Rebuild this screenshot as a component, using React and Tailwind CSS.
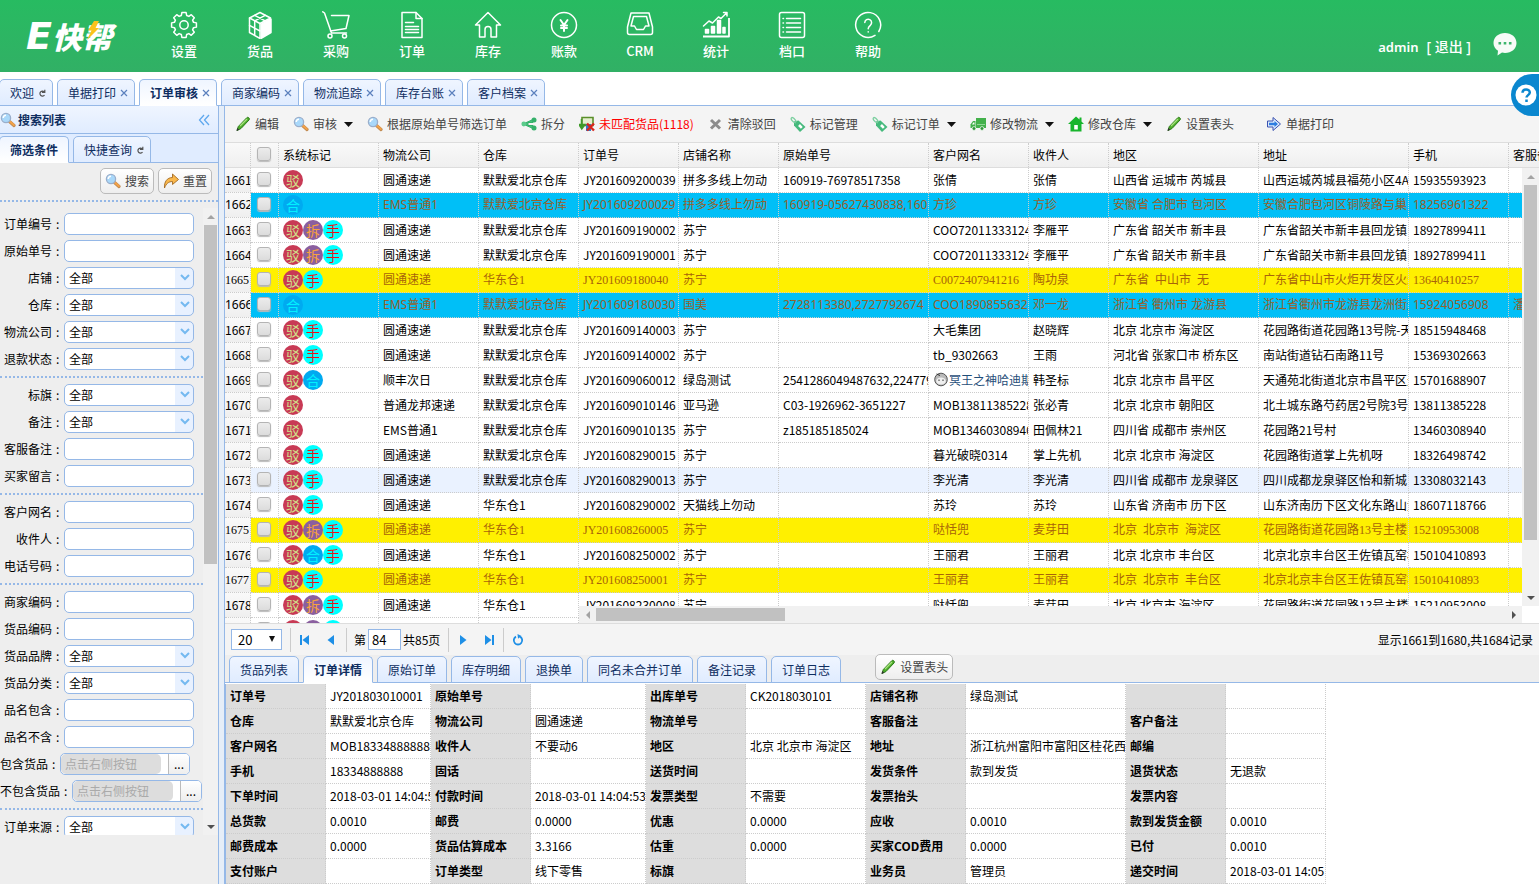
import React from "react";

const NAV = [
  ["设置", GearIcon],
  ["货品", BoxIcon],
  ["采购", CartIcon],
  ["订单", DocIcon],
  ["库存", HomeIcon],
  ["账款", YenIcon],
  ["CRM", InboxIcon],
  ["统计", ChartIcon],
  ["档口", ListIcon],
  ["帮助", HelpIcon],
];

function gearPath() {
  const pts = [];
  for (let i = 0; i < 8; i++) {
    const a = (i * Math.PI) / 4;
    [
      [-0.27, 9.9],
      [-0.17, 12.6],
      [0.17, 12.6],
      [0.27, 9.9],
    ].forEach(([d, r]) => {
      pts.push(`${(14 + r * Math.sin(a + d)).toFixed(2)} ${(14 - r * Math.cos(a + d)).toFixed(2)}`);
    });
  }
  return `M${pts.join("L")}Z`;
}

function NavSvg({ children }) {
  return (
    <svg className="size-7" viewBox="0 0 28 28" fill="none" stroke="white" strokeWidth="1.5" strokeLinejoin="round" strokeLinecap="round" aria-hidden="true">
      {children}
    </svg>
  );
}
function GearIcon() {
  return (
    <NavSvg>
      <path d={gearPath()} />
      <circle cx="14" cy="14" r="4.2" />
    </NavSvg>
  );
}
function BoxIcon() {
  return (
    <NavSvg>
      <path d="M14 1.5 24.5 7 14 12.5 3.5 7Z" />
      <path d="M8.7 4.3 19.2 9.8M19.2 4.3 8.7 9.8" />
      <path d="M3.5 7v14.5L14 27.5V12.5" />
      <path d="M3.5 14.3 14 20M8.7 9.8V24.5" />
      <path d="M15.2 13.2 25 8v13.5l-9.8 5.8Z" fill="white" />
    </NavSvg>
  );
}
function CartIcon() {
  return (
    <NavSvg>
      <path d="M.8.8 2.5 2 9.500 22h15" />
      <path d="M9.500 4.500 27 4.500l-3 13L8.500 20" />
      <circle cx="8" cy="25" r="2" />
      <circle cx="22.5" cy="25" r="2" />
    </NavSvg>
  );
}
function DocIcon() {
  return (
    <NavSvg>
      <path d="M4 1.5h14l6 6V26.500H4Z" />
      <path d="M18 1.500v6h6M7.500 11.500h8M7.500 15.500h13M7.500 18.500h13M7.500 21.500h13" />
    </NavSvg>
  );
}
function HomeIcon() {
  return (
    <NavSvg>
      <path d="M5.500 14H1.500L14 1.500 26.500 14h-4v12h-5.500v-7.500a3 3 0 0 0-6 0V26H5.500Z" />
    </NavSvg>
  );
}
function YenIcon() {
  return (
    <NavSvg>
      <circle cx="14" cy="14" r="12.500" />
      <path d="M10.500 9 14 14l3.500-5M14 14v6M11 14.500h6M11 17h6" strokeWidth="2" />
    </NavSvg>
  );
}
function InboxIcon() {
  return (
    <NavSvg>
      <path d="M5 2h18L26.500 16v5.500a2 2 0 0 1-2 2h-21a2 2 0 0 1-2-2V16Z" />
      <path d="M7.500 5.500h13L23 15h-3.500l-2 3.500h-7L8.500 15H5Z" />
    </NavSvg>
  );
}
function ChartIcon() {
  return (
    <NavSvg>
      <path d="M1.500 15 7 10l3.500 2 6-6 2.500 1.500 6-6M21.500 1.500H25V5" />
      <path d="M1 25.500h26V7" strokeWidth="1.800" strokeLinecap="butt" />
      <path d="M3.500 18.500h3V22h-3ZM9.500 15.500h3V22h-3ZM15.500 9.500h3V22h-3ZM21 16.500h2V22h-2Z" fill="white" />
    </NavSvg>
  );
}
function ListIcon() {
  return (
    <NavSvg>
      <rect x="1.500" y="1.500" width="25" height="25" rx="2" />
      <path d="M8.500 7.500h14M8.500 12h14M8.500 16.500h14M8.500 21h14M5 7.500h.500M5 12h.500M5 16.500h.500M5 21h.500" />
    </NavSvg>
  );
}
function HelpIcon() {
  return (
    <NavSvg>
      <path d="M24.800 20.500A12.500 12.500 0 1 0 21 24.400" />
      <path d="M10.800 11.500a3.400 3.400 0 1 1 5.500 2.800C14.800 15.500 14.200 16 14.200 17.800M14.200 20.800v.300" />
    </NavSvg>
  );
}

function Magnifier() {
  return (
    <svg className="size-4 shrink-0" viewBox="0 0 16 16" aria-hidden="true">
      <path d="m9.500 9.500 4.500 4" stroke="#c08a50" strokeWidth="3.200" strokeLinecap="round" />
      <path d="m9.800 9.500 4 3.600" stroke="#f2a24a" strokeWidth="2" strokeLinecap="round" />
      <circle cx="6" cy="6" r="4.600" fill="#a9d8fa" stroke="#9aaecb" strokeWidth="1.300" />
      <path d="M3.200 6A3 3 0 0 1 6 3.200" stroke="white" strokeWidth="1.500" fill="none" />
    </svg>
  );
}
function Pencil() {
  return (
    <svg className="size-4 shrink-0" viewBox="0 0 16 16" aria-hidden="true">
      <path d="M2 14.500 3.300 10.500 11.500 2a1.500 1.500 0 0 1 2.500 2L6 12.500Z" fill="#4fae2c" stroke="#2b7a18" />
      <path d="m5 10 7-7" stroke="#a9e27e" strokeWidth="1.300" />
      <path d="m1.500 15 .800-3 2 1.800Z" fill="#333" />
    </svg>
  );
}
function Redo() {
  return (
    <svg className="size-4 shrink-0" viewBox="0 0 16 16" aria-hidden="true">
      <path d="M1.500 15C1 9 4 4.500 9.500 4.500V1L15.500 6.500 9.500 11.500V8.500C5.500 8.500 3 11 1.500 15Z" fill="#f9b84c" stroke="#a36a22" strokeWidth=".900" />
    </svg>
  );
}
function Share() {
  return (
    <svg className="size-4 shrink-0" viewBox="0 0 16 16" aria-hidden="true">
      <path d="M12 3.500 2 8l10 4.500V9.500H7v-3h5Z" fill="#47c27c" stroke="#35b06a" />
      <circle cx="2.800" cy="8" r="2.400" fill="#5bcb8b" />
      <circle cx="13" cy="4" r="2.500" fill="#35b06a" />
      <circle cx="13" cy="12" r="2.500" fill="#35b06a" />
    </svg>
  );
}
function Mismatch() {
  return (
    <svg className="size-4 shrink-0" viewBox="0 0 16 16" aria-hidden="true">
      <path d="M3 1.500h11v8H3Z" fill="#e4efcf" stroke="#5a8f2a" strokeWidth="1.600" />
      <path d="M2.500 3v8M0 8.500 2.800 13 6 8.500Z" fill="#3f9a2a" stroke="#3f9a2a" strokeWidth="1.500" />
      <path d="M7 8h5v7H7Z" fill="#3b78c4" />
      <path d="m8 7.500 7 7M15 7.500l-7 7" stroke="#d8261c" strokeWidth="2.400" />
    </svg>
  );
}
function GrayCross() {
  return (
    <svg className="size-4 shrink-0" viewBox="0 0 16 16" aria-hidden="true">
      <path d="m3 4 9 8.500M12 4 3 12.500" stroke="#8d8d8d" strokeWidth="3" />
    </svg>
  );
}
function Tag() {
  return (
    <svg className="size-4 shrink-0" viewBox="0 0 16 16" aria-hidden="true">
      <path d="M4 5.500 8.500 4.500l7 6.500-5.500 5-6-6.500Z" fill="#45b97c" />
      <path d="m9 9 2.800 2.800" stroke="white" strokeWidth="2.600" />
      <path d="M6 7C2 5.500.500 3 1.500 1.800S5 3 6.500 6" stroke="#7bcf9f" strokeWidth="1.300" fill="none" />
    </svg>
  );
}
function Truck() {
  return (
    <svg className="size-4 shrink-0" viewBox="0 0 16 16" aria-hidden="true">
      <path d="M6 2h10v10H6Z" fill="#43b14b" />
      <path d="M5.500 5H3L.500 8.500V12h5Z" fill="#43b14b" />
      <path d="M2 8.500 3.300 6.500H4.500v2Z" fill="white" />
      <path d="M7 8.500h8" stroke="#8fd695" />
      <circle cx="4" cy="12.500" r="1.900" fill="#2e9437" stroke="white" strokeWidth=".700" />
      <circle cx="12" cy="12.500" r="1.900" fill="#2e9437" stroke="white" strokeWidth=".700" />
    </svg>
  );
}
function House() {
  return (
    <svg className="size-4 shrink-0" viewBox="0 0 16 16" aria-hidden="true">
      <path d="M8 .500 0 8h2.500v7.500h11V8H16l-2.500-2.500V1.500h-2v2Z" fill="#18b52d" />
      <path d="M6.200 9h3.600v4.500H6.200Z" fill="white" />
    </svg>
  );
}
function ArrowRightBlue() {
  return (
    <svg className="size-4 shrink-0" viewBox="0 0 16 16" aria-hidden="true">
      <path d="M1.500 5H7V1.500L14.500 8 7 14.500V11H1.500Z" fill="#dceafd" stroke="#3a52b0" />
      <path d="M3 6.800h5.500V5L12 8l-3.500 3V9.200H3Z" fill="#2e7de0" />
    </svg>
  );
}
function Caret() {
  return (
    <svg className="ml-[3px] h-[5px] w-[9px]" viewBox="0 0 9 5" aria-hidden="true">
      <path d="M0 0h9L4.500 5Z" fill="#111" />
    </svg>
  );
}
function Reload() {
  return (
    <svg className="size-2" viewBox="0 0 8 8" aria-hidden="true">
      <path d="M6.500 3.200A2.500 2.500 0 1 0 6.500 6M6.800.800v2.500H4" fill="none" stroke="#555" strokeWidth="1.200" />
    </svg>
  );
}
function CloseX() {
  return (
    <svg className="size-2" viewBox="0 0 8 8" aria-hidden="true">
      <path d="m1 1 6 6M7 1 1 7" stroke="#5b80bd" strokeWidth="1.200" />
    </svg>
  );
}

function Tab({ label, active, mark, first }) {
  return (
    <div
      className={
        "-mb-px flex h-[27px] shrink-0 items-center gap-1 rounded-t-[5px] border border-[#95b8e7] text-[#0e2d5f] " +
        (first ? "-ml-px " : "") +
        (mark ? "pr-[6px] pl-[10px] " : "px-[10px] ") +
        (active ? "border-b-white bg-linear-to-b from-[#eff5ff] to-white font-bold" : "bg-linear-to-b from-[#eff5ff] to-[#e0ecff]")
      }
    >
      <button type="button">{label}</button>
      {mark && (
        <button type="button" aria-label={(mark === "close" ? "关闭 " : "刷新 ") + label}>
          {mark === "close" ? <CloseX /> : <Reload />}
        </button>
      )}
    </div>
  );
}

function PushButton({ icon, children }) {
  return (
    <button type="button" className="flex h-[26px] items-center gap-1 rounded-[5px] border border-[#bbb] bg-linear-to-b from-white to-[#eee] px-1 text-[#444]">
      {icon}
      {children}
    </button>
  );
}

function ToolItem({ icon, label, menu, red }) {
  return (
    <button type="button" className={"flex shrink-0 items-center gap-1 whitespace-nowrap " + (red ? "text-[#f00]" : "text-[#444]")}>
      {icon}
      <span>{label}</span>
      {menu && <Caret />}
    </button>
  );
}

const FIELD_GROUPS = [
  [["订单编号"], ["原始单号"], ["店铺", "select"], ["仓库", "select"], ["物流公司", "select"], ["退款状态", "select"]],
  [["标旗", "select"], ["备注", "select"], ["客服备注"], ["买家留言"]],
  [["客户网名"], ["收件人"], ["电话号码"]],
  [["商家编码"], ["货品编码"], ["货品品牌", "select"], ["货品分类", "select"], ["品名包含"], ["品名不含"], ["包含货品", "pick"], ["不包含货品", "pick"]],
  [["订单来源", "select"]],
];

function Field({ label, kind }) {
  const id = "f-" + label;
  return (
    <div className="flex items-center gap-1">
      <label htmlFor={id} className={"flex shrink-0 justify-end gap-1 whitespace-nowrap " + (kind === "pick" ? "" : "w-[60px]")}>
        <span>{label}</span>
        <span className="w-1">:</span>
      </label>
      {!kind && <input id={id} className="h-[22px] w-[130px] rounded-[5px] border border-[#95b8e7] bg-white px-1 outline-none" />}
      {kind === "select" && (
        <div className="relative flex">
          <select id={id} className="h-[22px] w-[130px] appearance-none rounded-[5px] border border-[#95b8e7] bg-linear-to-r from-white from-[110px] to-[#e8f1ff] to-[110px] px-1 outline-none">
            <option>全部</option>
          </select>
          <svg className="pointer-events-none absolute top-[7px] right-1 h-[7px] w-[10px]" viewBox="0 0 10 7" fill="none" aria-hidden="true">
            <path d="m1 1 4 4 4-4" stroke="#74b9f0" strokeWidth="2" />
          </svg>
        </div>
      )}
      {kind === "pick" && (
        <div className="flex h-[22px] w-[130px] shrink-0 overflow-hidden rounded-[5px] border border-[#95b8e7] bg-white">
          <input id={id} disabled placeholder="点击右侧按钮" className="w-[100px] rounded-[5px] bg-[#ddd] px-1 placeholder:text-[#aaa]" />
          <button type="button" aria-label={"选择" + label} className="ml-auto w-[21px] border-l border-[#bbb] bg-linear-to-b from-white to-[#eee]">
            ...
          </button>
        </div>
      )}
    </div>
  );
}

function Arrow({ dir, dark }) {
  const d = { up: "M0 6h8L4 2Z", down: "M0 2h8L4 6Z", left: "M6 0v8L2 4Z", right: "M2 0v8L6 4Z" }[dir];
  return (
    <svg className="size-2" viewBox="0 0 8 8" aria-hidden="true">
      <path d={d} fill={dark ? "#505050" : "#a3a3a3"} />
    </svg>
  );
}

const BADGES = {
  驳: "bg-[#c83a55] text-[#cfe08a]",
  拆: "bg-[#8a5f9f] text-[#f8a23c]",
  手: "bg-[#00ffff] text-[#e81414]",
  合: "bg-[#00aaf0] text-[#00f0ff]",
};

// number, tone, badges, carrier, warehouse, order, shop, source no, customer, receiver, region, address, phone, service note
const ROWS = [
  ["1661", "", "驳", "圆通速递", "默默爱北京仓库", "JY201609200039", "拼多多线上勿动", "160919-76978517358", "张倩", "张倩", "山西省 运城市 芮城县", "山西运城芮城县福苑小区4A", "15935593923", ""],
  ["1662", "blue", "合", "EMS普通1", "默默爱北京仓库", "JY201609200029", "拼多多线上勿动", "160919-05627430838,160", "方珍", "方珍", "安徽省 合肥市 包河区", "安徽合肥包河区铜陵路与巢", "18256961322", ""],
  ["1663", "", "驳拆手", "圆通速递", "默默爱北京仓库", "JY201609190002", "苏宁", "", "COO72011333124", "李雁平", "广东省 韶关市 新丰县", "广东省韶关市新丰县回龙镇", "18927899411", ""],
  ["1664", "", "驳拆手", "圆通速递", "默默爱北京仓库", "JY201609190001", "苏宁", "", "COO72011333124", "李雁平", "广东省 韶关市 新丰县", "广东省韶关市新丰县回龙镇", "18927899411", ""],
  ["1665", "yellow", "驳手", "圆通速递", "华东仓1", "JY201609180040", "苏宁", "", "C0072407941216", "陶功泉", "广东省  中山市  无", "广东省中山市火炬开发区火炬", "13640410257", ""],
  ["1666", "blue", "合", "EMS普通1", "默默爱北京仓库", "JY201609180030", "国美", "2728113380,2727792674", "COO1890855632", "邓一龙", "浙江省 衢州市 龙游县", "浙江省衢州市龙游县龙洲街道", "15924056908", "潘"],
  ["1667", "", "驳手", "圆通速递", "默默爱北京仓库", "JY201609140003", "苏宁", "", "大毛集团", "赵晓辉", "北京 北京市 海淀区", "花园路街道花园路13号院-天", "18515948468", ""],
  ["1668", "", "驳手", "圆通速递", "默默爱北京仓库", "JY201609140002", "苏宁", "", "tb_9302663", "王雨", "河北省 张家口市 桥东区", "南站街道钻石南路11号", "15369302663", ""],
  ["1669", "", "驳合", "顺丰次日", "默默爱北京仓库", "JY201609060012", "绿岛测试", "2541286049487632,224779", "@冥王之神哈迪斯", "韩圣标", "北京 北京市 昌平区", "天通苑北街道北京市昌平区天", "15701688907", ""],
  ["1670", "", "驳", "普通龙邦速递", "默默爱北京仓库", "JY201609010146", "亚马逊", "C03-1926962-3651227", "MOB13811385228", "张必青", "北京 北京市 朝阳区", "北土城东路芍药居2号院3号", "13811385228", ""],
  ["1671", "", "驳", "EMS普通1", "默默爱北京仓库", "JY201609010135", "苏宁", "z185185185024", "MOB13460308940", "田佩林21", "四川省 成都市 崇州区", "花园路21号村", "13460308940", ""],
  ["1672", "", "驳手", "圆通速递", "默默爱北京仓库", "JY201608290015", "苏宁", "", "暮光破晓0314", "掌上先机", "北京 北京市 海淀区", "花园路街道掌上先机呀", "18326498742", ""],
  ["1673", "hover", "驳手", "圆通速递", "默默爱北京仓库", "JY201608290013", "苏宁", "", "李光清", "李光清", "四川省 成都市 龙泉驿区", "四川成都龙泉驿区怡和新城", "13308032143", ""],
  ["1674", "", "驳手", "圆通速递", "华东仓1", "JY201608290002", "天猫线上勿动", "", "苏玲", "苏玲", "山东省 济南市 历下区", "山东济南历下区文化东路山大", "18607118766", ""],
  ["1675", "yellow", "驳拆手", "圆通速递", "华东仓1", "JY201608260005", "苏宁", "", "哒恬兜", "麦芽田", "北京  北京市  海淀区", "花园路街道花园路13号主楼", "15210953008", ""],
  ["1676", "", "驳合手", "圆通速递", "华东仓1", "JY201608250002", "苏宁", "", "王丽君", "王丽君", "北京 北京市 丰台区", "北京北京丰台区王佐镇瓦窑村", "15010410893", ""],
  ["1677", "yellow", "驳手", "圆通速递", "华东仓1", "JY201608250001", "苏宁", "", "王丽君", "王丽君", "北京  北京市  丰台区", "北京北京丰台区王佐镇瓦窑村", "15010410893", ""],
  ["1678", "", "驳拆手", "圆通速递", "华东仓1", "JY201608230008", "苏宁", "", "哒恬兜", "麦芽田", "北京 北京市 海淀区", "花园路街道花园路13号主楼", "15210953008", ""],
  ["", "", "驳拆手", "", "", "", "", "", "", "", "", "", "", ""],
];

const TONES = {
  "": "",
  hover: "bg-[#eaf2ff]",
  blue: "bg-[#00bff7] text-[#96602a] font-['Noto_Sans','Noto_Sans_CJK_SC',sans-serif]",
  yellow: "bg-[#fff000] text-[#a8640a] font-['Liberation_Serif','Noto_Sans_CJK_SC',serif]",
};

const CELL = "h-[25px] overflow-hidden border-r border-b border-dotted border-[#ccc] px-1 py-0 text-left leading-6 font-normal whitespace-pre";
const HEAD = "h-[25px] overflow-hidden border-r border-b border-dotted border-r-[#ccc] border-b-[#ddd] [border-bottom-style:solid] px-1 py-0 text-left leading-6 font-normal whitespace-nowrap";
const TABLE = "table-fixed border-separate border-spacing-0";
const CHECK = "mx-[2px] mb-[2px] block size-[14px] appearance-none rounded-[3px] border border-[#b4b4b4] bg-linear-to-b from-[#ececec] to-[#dcdcdc] shadow-[0_1px_1px_#bbb]";

function Cols({ widths }) {
  return (
    <colgroup>
      {widths.map((w, i) => (
        <col key={i} style={{ width: w }} />
      ))}
    </colgroup>
  );
}

const LEFT_W = [26, 28, 100, 100, 100];
const RIGHT_W = [100, 100, 150, 100, 80, 150, 150, 100, 100];
const RIGHT_HEAD = ["订单号", "店铺名称", "原始单号", "客户网名", "收件人", "地区", "地址", "手机", "客服备注"];

function Customer({ value }) {
  if (!value.startsWith("@")) return value;
  return (
    <a href="#customer" className="flex items-center text-[#1f4e79]">
      <svg className="size-4 shrink-0" viewBox="0 0 16 16" aria-hidden="true">
        <circle cx="8" cy="7.500" r="6.300" fill="#b9b9b9" stroke="#555" />
        <ellipse cx="8" cy="9" rx="4.800" ry="3.600" fill="#efefef" />
        <path d="M3.500 2 7 3.500M6 7.500v1.500M10 7.500v1.500" stroke="#333" />
      </svg>
      {value.slice(1)}
    </a>
  );
}

function OrderGrid() {
  return (
    <div className="flex min-h-0 flex-1 overflow-hidden bg-white">
      <div className="w-[354px] shrink-0 overflow-hidden">
        <table className={TABLE + " w-[354px]"}>
          <Cols widths={LEFT_W} />
          <thead>
            <tr className="bg-linear-to-b from-[#f9f9f9] to-[#efefef]">
              <th className={HEAD} aria-label="序号"></th>
              <th className={HEAD}>
                <input type="checkbox" aria-label="全选" className={CHECK} />
              </th>
              <th className={HEAD}>系统标记</th>
              <th className={HEAD}>物流公司</th>
              <th className={HEAD}>仓库</th>
            </tr>
          </thead>
          <tbody>
            {ROWS.map((r, i) => (
              <tr key={i} className={TONES[r[1]]}>
                <td className="h-[25px] overflow-hidden border-r border-b border-dotted border-[#ccc] bg-linear-to-b from-[#f9f9f9] to-[#efefef] p-0 leading-6 whitespace-nowrap text-black">{r[0]}</td>
                <td className={CELL}>
                  <input type="checkbox" aria-label={"选择第" + (i + 1) + "行"} className={CHECK} />
                </td>
                <td className={CELL}>
                  <div className="flex h-6 items-center">
                    {[...r[2]].map((b) => (
                      <span key={b} className={"flex size-5 items-center justify-center rounded-full font-['Noto_Sans_CJK_SC',sans-serif] text-[14px] leading-5 " + BADGES[b]}>
                        {b}
                      </span>
                    ))}
                  </div>
                </td>
                <td className={CELL}>{r[3]}</td>
                <td className={CELL}>{r[4]}</td>
              </tr>
            ))}
          </tbody>
        </table>
      </div>
      <div className="flex min-w-0 flex-1 flex-col">
        <div className="shrink-0 overflow-hidden border-b border-[#ddd] bg-linear-to-b from-[#f9f9f9] to-[#efefef]">
          <table className={TABLE + " w-[1030px]"}>
            <Cols widths={RIGHT_W} />
            <thead>
              <tr>
                {RIGHT_HEAD.map((h) => (
                  <th key={h} className="h-6 overflow-hidden border-r border-dotted border-[#ccc] px-1 py-0 text-left leading-6 font-normal whitespace-nowrap">
                    {h}
                  </th>
                ))}
              </tr>
            </thead>
          </table>
        </div>
        <div className="flex min-h-0 flex-1">
          <div className="min-w-0 flex-1 overflow-hidden">
            <table className={TABLE + " w-[1030px]"}>
              <Cols widths={RIGHT_W} />
              <tbody>
                {ROWS.map((r, n) => (
                  <tr key={n} className={TONES[r[1]]}>
                    {r.slice(5).map((c, i) => (
                      <td key={i} className={CELL}>
                        <Customer value={c} />
                      </td>
                    ))}
                  </tr>
                ))}
              </tbody>
            </table>
          </div>
          <div className="flex w-[17px] shrink-0 flex-col items-center bg-[#f1f1f1]">
            <div className="flex h-[17px] items-center"><Arrow dir="up" /></div>
            <div className="h-[81%] w-[13px] bg-[#c1c1c1]"></div>
            <div className="mt-auto flex h-[17px] items-center"><Arrow dir="down" dark /></div>
          </div>
        </div>
        <div className="mr-[17px] flex h-[17px] shrink-0 items-center bg-[#f1f1f1]">
          <div className="flex w-[17px] justify-center"><Arrow dir="left" /></div>
          <div className="h-[13px] w-1/5 bg-[#c1c1c1]"></div>
          <div className="ml-auto flex w-[17px] justify-center"><Arrow dir="right" dark /></div>
        </div>
      </div>
    </div>
  );
}

function PageBtn({ label, children }) {
  return (
    <button type="button" aria-label={label} className="flex size-[26px] items-center justify-center">
      <svg className="size-3" viewBox="0 0 12 12" fill="#1e8fe6" stroke="#1e8fe6" strokeWidth="0" aria-hidden="true">
        {children}
      </svg>
    </button>
  );
}

function Pager() {
  const sep = <span className="h-6 w-px bg-[#ccc]"></span>;
  return (
    <div className="flex h-8 shrink-0 items-center border-t border-[#ddd] bg-[#f4f4f4] pr-[6px] pl-[6px]">
      <div className="relative flex">
        <select aria-label="每页条数" className="h-[21px] w-[51px] appearance-none border border-[#95b8e7] bg-white px-[6px] text-[13px] leading-4">
          <option>20</option>
        </select>
        <svg className="pointer-events-none absolute top-[6px] right-[6px] size-2" viewBox="0 0 8 8" aria-hidden="true">
          <path d="M1 1h6L4 7Z" fill="#111" />
        </svg>
      </div>
      <span className="w-2"></span>
      {sep}
      <span className="w-px"></span>
      <PageBtn label="首页"><path d="M1 1h2v10H1ZM10 1v10L3.500 6Z" /></PageBtn>
      <PageBtn label="上一页"><path d="M9 1v10L2.500 6Z" /></PageBtn>
      <span className="w-[2px]"></span>
      {sep}
      <label className="flex items-center gap-[2px] pl-[7px]">
        第
        <input defaultValue="84" className="h-[21px] w-[33px] border border-[#95b8e7] bg-white px-[3px] text-[13px] outline-none" />
      </label>
      <span className="px-[2px]">共85页</span>
      <span className="w-[6px]"></span>
      {sep}
      <span className="w-px"></span>
      <PageBtn label="下一页"><path d="M3 1v10L9.500 6Z" /></PageBtn>
      <PageBtn label="末页"><path d="M9 1h2v10H9ZM2 1v10L8.500 6Z" /></PageBtn>
      <span className="w-px"></span>
      {sep}
      <span className="w-px"></span>
      <PageBtn label="刷新">
        <path d="M4 2.600a4.200 4.200 0 1 0 4 0" fill="none" strokeWidth="1.800" />
        <path d="M5.500 0 9.500 2 6 4.800Z" />
      </PageBtn>
      <span className="ml-auto">显示1661到1680,共1684记录</span>
    </div>
  );
}

const DETAIL_TABS = ["货品列表", "订单详情", "原始订单", "库存明细", "退换单", "同名未合并订单", "备注记录", "订单日志"];
const DETAIL = [
  ["订单号", "JY201803010001", "原始单号", "", "出库单号", "CK2018030101", "店铺名称", "绿岛测试", "", ""],
  ["仓库", "默默爱北京仓库", "物流公司", "圆通速递", "物流单号", "", "客服备注", "", "客户备注", ""],
  ["客户网名", "MOB18334888888", "收件人", "不要动6", "地区", "北京 北京市 海淀区", "地址", "浙江杭州富阳市富阳区桂花西", "邮编", ""],
  ["手机", "18334888888", "固话", "", "送货时间", "", "发货条件", "款到发货", "退货状态", "无退款"],
  ["下单时间", "2018-03-01 14:04:53", "付款时间", "2018-03-01 14:04:53", "发票类型", "不需要", "发票抬头", "", "发票内容", ""],
  ["总货款", "0.0010", "邮费", "0.0000", "优惠", "0.0000", "应收", "0.0010", "款到发货金额", "0.0010"],
  ["邮费成本", "0.0000", "货品估算成本", "3.3166", "估重", "0.0000", "买家COD费用", "0.0000", "已付", "0.0010"],
  ["支付账户", "", "订单类型", "线下零售", "标旗", "", "业务员", "管理员", "递交时间", "2018-03-01 14:05"],
];

export default function App() {
  return (
    <div className="flex h-screen flex-col overflow-hidden bg-white font-['Noto_Sans_CJK_SC',sans-serif] text-[12px] leading-4 text-black">
      <header className="flex h-[72px] shrink-0 items-center bg-linear-to-b from-[#27bb61] to-[#31b065] text-white">
        <a href="#home" aria-label="E快帮" className="relative ml-[26px] flex w-[120px] items-baseline font-black italic">
          <span className="font-['DejaVu_Sans',sans-serif] text-[38px] leading-10">E</span>
          <span className="text-[30px] leading-10">快帮</span>
          <svg className="absolute top-[5px] left-[60px] h-[19px] w-[14px]" viewBox="0 0 14 19" aria-hidden="true">
            <path d="M8 0h5L9.500 7H13L1 19 5.500 9.500H2Z" fill="#fbc21c" />
          </svg>
        </a>
        <nav className="flex">
          {NAV.map(([label, Icon]) => (
            <a key={label} href={"#" + label} className="flex w-[76px] flex-col items-center gap-[2px] text-[13px] leading-5 font-medium">
              <Icon />
              {label}
            </a>
          ))}
        </nav>
        <div className="mt-[22px] ml-auto flex items-center gap-2 pr-[22px] font-['Noto_Sans','Noto_Sans_CJK_SC',sans-serif] text-[14px] font-medium">
          <span className="text-[13px] font-semibold">admin</span>
          <a href="#logout">[ 退出 ]</a>
          <button type="button" aria-label="消息" className="mb-[6px] ml-[14px]">
            <svg className="size-6" viewBox="0 0 24 24" aria-hidden="true">
              <path d="M12 1c6.500 0 11.500 4.300 11.500 10S18.500 21 12 21c-1 0-2 0-3-.400L4.500 23.500 5 18.800C2 17 .500 14 .500 11 .500 5.300 5.500 1 12 1Z" fill="#f7fbf8" />
              <path d="M5.500 10h2.600v2.600H5.500ZM10.700 10h2.600v2.600h-2.600ZM15.900 10h2.600v2.600h-2.600Z" fill="#3db56d" />
            </svg>
          </button>
        </div>
      </header>

      <div className="relative flex h-[34px] shrink-0 items-end gap-1 border-b border-[#95b8e7]">
        <Tab label="欢迎" mark="reload" first />
        <Tab label="单据打印" mark="close" />
        <Tab label="订单审核" mark="close" active />
        <Tab label="商家编码" mark="close" />
        <Tab label="物流追踪" mark="close" />
        <Tab label="库存台账" mark="close" />
        <Tab label="客户档案" mark="close" />
        <button type="button" aria-label="在线帮助" className="absolute top-[2px] right-0 flex h-[42px] w-7 items-center rounded-l-full bg-[#0a87cf] pl-1">
          <svg className="size-[22px] shrink-0" viewBox="0 0 22 22" aria-hidden="true">
            <circle cx="11" cy="11" r="10.500" fill="white" />
            <path d="M7.500 8.800c0-4.600 7.300-4.300 7.300-.300 0 2.500-3.300 2.700-3.300 5M11.500 15.500v2.400" fill="none" stroke="#0a87cf" strokeWidth="2.500" />
          </svg>
        </button>
      </div>

      <div className="flex min-h-0 flex-1">
        <aside className="flex w-[219px] shrink-0 flex-col border-r border-[#95b8e7] bg-[#eee]">
          <div className="flex h-7 shrink-0 items-center gap-[2px] border-b border-[#95b8e7] bg-linear-to-b from-[#eff5ff] to-[#e0ecff] pr-2 font-bold text-[#0e2d5f]">
            <Magnifier />
            <h2>搜索列表</h2>
            <button type="button" aria-label="折叠" className="ml-auto">
              <svg className="size-3" viewBox="0 0 12 12" fill="none" stroke="#5fa8ee" strokeWidth="1.300" aria-hidden="true">
                <path d="M6 1 1.500 6 6 11M11 1 6.500 6 11 11" />
              </svg>
            </button>
          </div>
          <div className="flex h-[29px] shrink-0 items-end gap-1 border-b border-[#95b8e7] bg-[#e0ecff]">
            <Tab label="筛选条件" active first />
            <Tab label="快捷查询" mark="reload" />
          </div>
          <div className="flex shrink-0 justify-end gap-1 border-b-2 border-dotted border-[#95b8e7] pt-[5px] pr-[6px] pb-[6px]">
            <PushButton icon={<Magnifier />}>搜索</PushButton>
            <PushButton icon={<Redo />}>重置</PushButton>
          </div>
          <div className="mt-[6px] mb-[49px] flex min-h-0 flex-1">
            <form className="flex min-w-0 flex-1 flex-col overflow-hidden pt-[5px]">
              {FIELD_GROUPS.map((g, i) => (
                <div key={i} className={"flex shrink-0 flex-col gap-[5px] " + (i ? "mt-[6px] border-t-2 border-dotted border-[#95b8e7] pt-[6px]" : "")}>
                  {g.map(([label, kind]) => (
                    <Field key={label} label={label} kind={kind} />
                  ))}
                </div>
              ))}
            </form>
            <div className="flex w-[15px] shrink-0 flex-col items-center bg-[#f1f1f1]">
              <div className="flex h-[17px] items-center"><Arrow dir="up" /></div>
              <div className="h-[54%] w-[13px] bg-[#c1c1c1]"></div>
              <div className="mt-auto flex h-[17px] items-center"><Arrow dir="down" dark /></div>
            </div>
          </div>
        </aside>
        <div className="w-[5px] shrink-0 bg-[#e6eef8]"></div>

        <main className="flex min-w-0 flex-1 flex-col border-l border-[#95b8e7] bg-white">
          <div className="flex h-[37px] shrink-0 items-center gap-[14px] overflow-hidden border-b border-[#ddd] bg-[#f4f4f4] pl-[10px]">
            <ToolItem icon={<Pencil />} label="编辑" />
            <ToolItem icon={<Magnifier />} label="审核" menu />
            <ToolItem icon={<Magnifier />} label="根据原始单号筛选订单" />
            <ToolItem icon={<Share />} label="拆分" />
            <ToolItem icon={<Mismatch />} label="未匹配货品(1118)" red />
            <ToolItem icon={<GrayCross />} label="清除驳回" />
            <ToolItem icon={<Tag />} label="标记管理" />
            <ToolItem icon={<Tag />} label="标记订单" menu />
            <ToolItem icon={<Truck />} label="修改物流" menu />
            <ToolItem icon={<House />} label="修改仓库" menu />
            <ToolItem icon={<Pencil />} label="设置表头" />
            <span className="w-1"></span>
            <ToolItem icon={<ArrowRightBlue />} label="单据打印" />
          </div>
          <OrderGrid />
          <Pager />
          <div className="mb-px flex h-7 shrink-0 items-end gap-1 border-b border-[#95b8e7] bg-[#eee] pl-1">
            {DETAIL_TABS.map((t) => (
              <Tab key={t} label={t} active={t === "订单详情"} />
            ))}
            <div className="mb-[2px] ml-[30px]">
              <PushButton icon={<Pencil />}>设置表头</PushButton>
            </div>
          </div>
          <div className="shrink-0 overflow-hidden border-l border-[#95b8e7]">
            <table className={TABLE + " w-[1100px]"}>
              <Cols widths={[100, 105, 100, 115, 100, 120, 100, 160, 100, 100]} />
              <tbody>
                {DETAIL.map((r, i) => (
                  <tr key={i}>
                    {r.map((c, j) =>
                      j % 2 === 0 ? (
                        <th key={j} className="h-[25px] overflow-hidden border-r border-b border-dotted border-[#ccc] bg-[#ddd] px-1 py-0 text-left leading-6 font-bold whitespace-nowrap">
                          {c}
                        </th>
                      ) : (
                        <td key={j} className={CELL}>{c}</td>
                      )
                    )}
                  </tr>
                ))}
              </tbody>
            </table>
          </div>
        </main>
      </div>
    </div>
  );
}
